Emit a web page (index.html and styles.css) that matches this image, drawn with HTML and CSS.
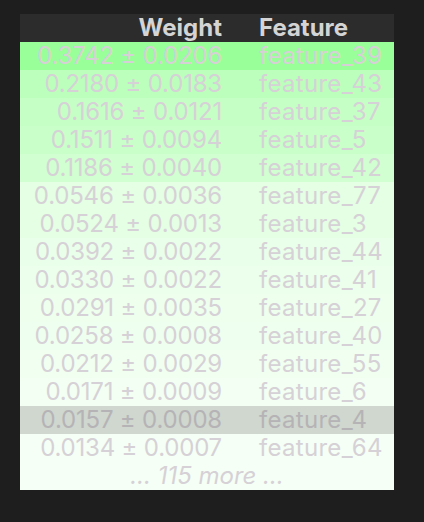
FILE: index.html
```html
<!DOCTYPE html>
<html lang="en">
<head>
  <meta charset="UTF-8" />
  <title>Permutation importance</title>
  <link rel="stylesheet" href="styles.css">
</head>
<body>
  <table class="eli5-weights">
    <thead>
      <tr>
        <th class="weight">Weight</th>
        <th class="feature">Feature</th>
      </tr>
    </thead>
    <tbody>
      <tr class="w1"><td class="weight">0.3742 &plusmn; 0.0206</td><td class="feature">feature_39</td></tr>
      <tr class="w2"><td class="weight">0.2180 &plusmn; 0.0183</td><td class="feature">feature_43</td></tr>
      <tr class="w3"><td class="weight">0.1616 &plusmn; 0.0121</td><td class="feature">feature_37</td></tr>
      <tr class="w4"><td class="weight">0.1511 &plusmn; 0.0094</td><td class="feature">feature_5</td></tr>
      <tr class="w5"><td class="weight">0.1186 &plusmn; 0.0040</td><td class="feature">feature_42</td></tr>
      <tr class="w6"><td class="weight">0.0546 &plusmn; 0.0036</td><td class="feature">feature_77</td></tr>
      <tr class="w7"><td class="weight">0.0524 &plusmn; 0.0013</td><td class="feature">feature_3</td></tr>
      <tr class="w8"><td class="weight">0.0392 &plusmn; 0.0022</td><td class="feature">feature_44</td></tr>
      <tr class="w9"><td class="weight">0.0330 &plusmn; 0.0022</td><td class="feature">feature_41</td></tr>
      <tr class="w10"><td class="weight">0.0291 &plusmn; 0.0035</td><td class="feature">feature_27</td></tr>
      <tr class="w11"><td class="weight">0.0258 &plusmn; 0.0008</td><td class="feature">feature_40</td></tr>
      <tr class="w12"><td class="weight">0.0212 &plusmn; 0.0029</td><td class="feature">feature_55</td></tr>
      <tr class="w13"><td class="weight">0.0171 &plusmn; 0.0009</td><td class="feature">feature_6</td></tr>
      <tr class="w14 hovered"><td class="weight">0.0157 &plusmn; 0.0008</td><td class="feature">feature_4</td></tr>
      <tr class="w15"><td class="weight">0.0134 &plusmn; 0.0007</td><td class="feature">feature_64</td></tr>
      <tr class="w16"><td class="more" colspan="2">&hellip; 115 more &hellip;</td></tr>
    </tbody>
  </table>
</body>
</html>
```

FILE: styles.css
```css
* {
  box-sizing: border-box;
}

body {
  margin: 0;
  padding: 14px 0 0 20px;
  background-color: #1e1e1e;
  font-family: 'Inter', 'Liberation Sans', sans-serif;
}

.eli5-weights {
  border-collapse: collapse;
  border: none;
  width: 374px;
  table-layout: fixed;
  font-size: 24px;
  color: #d6d1d6;
}

.eli5-weights th,
.eli5-weights td {
  height: 28px;
  line-height: 28px;
  padding: 0;
  white-space: nowrap;
  overflow: visible;
}

.eli5-weights thead tr {
  background-color: #2c2c2c;
}

.eli5-weights th {
  font-weight: 700;
  color: #d4d4d4;
}

.eli5-weights .weight {
  width: 220px;
  text-align: right;
  padding-right: 18px;
}

.eli5-weights td.weight {
  letter-spacing: -0.2px;
}

.eli5-weights .feature {
  text-align: left;
  padding-left: 19px;
}

.eli5-weights td.feature {
  letter-spacing: 0.3px;
}

.eli5-weights .more {
  text-align: center;
  font-style: italic;
}

.w1 { background-color: #99ff99; }
.w2 { background-color: #bcffbc; }
.w3 { background-color: #c6ffc6; }
.w4 { background-color: #c9ffc9; }
.w5 { background-color: #d1ffd1; }
.w6 { background-color: #e4ffe4; }
.w7 { background-color: #e5ffe5; }
.w8 { background-color: #eaffea; }
.w9 { background-color: #ecffec; }
.w10 { background-color: #eeffee; }
.w11 { background-color: #efffef; }
.w12 { background-color: #f1fff1; }
.w13 { background-color: #f3fff3; }
.w15 { background-color: #f5fff5; }
.w16 { background-color: #f5fff5; }

.eli5-weights tr.hovered {
  background-color: #cfd7cf;
  color: #b6b3b6;
}
```
